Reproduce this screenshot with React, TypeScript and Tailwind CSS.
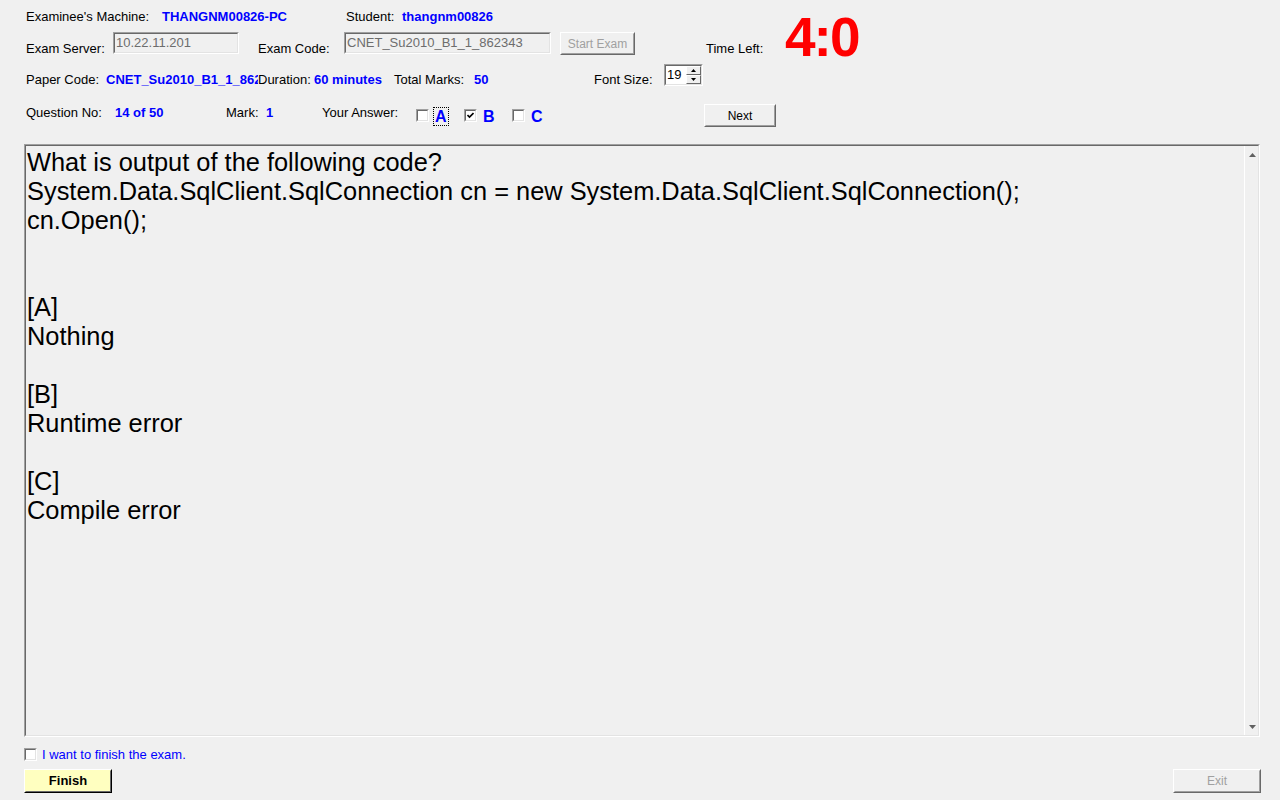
import React from 'react'

const Label = ({ children, className = '' }: { children: React.ReactNode; className?: string }) => (
  <span className={`text-[13px] leading-[15px] text-black whitespace-nowrap ${className}`}>{children}</span>
)

const Value = ({ children, className = '' }: { children: React.ReactNode; className?: string }) => (
  <span className={`text-[13px] leading-[15px] font-bold text-[#0000ff] whitespace-nowrap ${className}`}>{children}</span>
)

function Field({ value, width }: { value: string; width: string }) {
  return (
    <div className={`${width} h-[22px] border border-t-[#a0a0a0] border-l-[#a0a0a0] border-b-white border-r-white bg-[#f0f0f0]`}>
      <div className="h-full border border-t-[#696969] border-l-[#696969] border-b-[#e3e3e3] border-r-[#e3e3e3] pl-[1px] text-[13px] leading-[18px] text-[#6d6d6d] whitespace-nowrap overflow-hidden">
        {value}
      </div>
    </div>
  )
}

function WinButton({ label, width, disabled }: { label: string; width: string; disabled?: boolean }) {
  return (
    <div className={`${width} h-[23px] border border-t-white border-l-white border-b-[#696969] border-r-[#696969] bg-[#f0f0f0]`}>
      <div
        className={`h-full flex items-center justify-center border border-t-[#f0f0f0] border-l-[#f0f0f0] border-b-[#a0a0a0] border-r-[#a0a0a0] text-[12px] ${
          disabled ? 'text-[#a0a0a0]' : 'text-black'
        }`}
      >
        {label}
      </div>
    </div>
  )
}

function CheckBox({ checked }: { checked?: boolean }) {
  return (
    <div className="w-[13px] h-[13px] border border-t-[#a0a0a0] border-l-[#a0a0a0] border-b-white border-r-white">
      <div className="w-full h-full border border-t-[#696969] border-l-[#696969] border-b-[#e3e3e3] border-r-[#e3e3e3] bg-white flex items-center justify-center">
        {checked && (
          <svg width="7" height="7" viewBox="0 0 7 7">
            <path d="M0.5 3 L2.5 5 L6.5 1" stroke="black" strokeWidth="1.6" fill="none" />
          </svg>
        )}
      </div>
    </div>
  )
}

function Arrow({ down }: { down?: boolean }) {
  return (
    <svg width="7" height="4" viewBox="0 0 7 4">
      <path d={down ? 'M0 0 H7 L3.5 4 Z' : 'M0 4 H7 L3.5 0 Z'} fill="#606060" />
    </svg>
  )
}

const lines = [
  'What is output of the following code?',
  'System.Data.SqlClient.SqlConnection cn = new System.Data.SqlClient.SqlConnection();',
  'cn.Open();',
  '',
  '',
  '[A]',
  'Nothing',
  '',
  '[B]',
  'Runtime error',
  '',
  '[C]',
  'Compile error',
]

export default function App() {
  return (
    <div className="w-[1280px] h-[800px] bg-[#f0f0f0] font-['Liberation_Sans',Arial,sans-serif] overflow-hidden">
      {/* row 1 */}
      <div className="flex items-center h-[22px] mt-[5px] pl-[26px]">
        <Label className="w-[136px]">Examinee's Machine:</Label>
        <Value className="w-[184px]">THANGNM00826-PC</Value>
        <Label className="w-[56px]">Student:</Label>
        <Value>thangnm00826</Value>
      </div>

      {/* row 2 */}
      <div className="flex items-start h-[22px] mt-[5px] pl-[26px]">
        <Label className="w-[87px] mt-[9px]">Exam Server:</Label>
        <Field value="10.22.11.201" width="w-[126px]" />
        <Label className="w-[86px] ml-[19px] mt-[9px]">Exam Code:</Label>
        <Field value="CNET_Su2010_B1_1_862343" width="w-[207px]" />
        <div className="ml-[9px]">
          <WinButton label="Start Exam" width="w-[75px]" disabled />
        </div>
        <Label className="w-[79px] ml-[71px] mt-[9px]">Time Left:</Label>
        <span className="-mt-[22px] text-[55px] leading-none font-bold tracking-[-2px] text-[#ff0000]">4:0</span>
      </div>

      {/* row 3 */}
      <div className="flex items-start h-[22px] mt-[10px] pl-[26px]">
        <Label className="w-[80px] mt-[8px]">Paper Code:</Label>
        <div className="w-[152px] overflow-hidden mt-[8px] flex text-[13px] leading-[15px]">
          <Value>CNET_Su2010_B1_1_862343</Value>
        </div>
        <Label className="w-[56px] mt-[8px]">Duration:</Label>
        <Value className="w-[80px] mt-[8px]">60 minutes</Value>
        <Label className="w-[80px] mt-[8px]">Total Marks:</Label>
        <Value className="w-[120px] mt-[8px]">50</Value>
        <Label className="w-[70px] mt-[8px]">Font Size:</Label>
        <div className="w-[39px] h-[22px] border border-t-[#a0a0a0] border-l-[#a0a0a0] border-b-white border-r-white">
          <div className="h-full flex border border-t-[#696969] border-l-[#696969] border-b-[#e3e3e3] border-r-[#e3e3e3] bg-white">
            <span className="flex-1 pl-[1px] text-[13px] leading-[18px] text-black">19</span>
            <div className="w-[15px] flex flex-col">
              <div className="flex-1 flex items-center justify-center border border-t-white border-l-white border-b-[#696969] border-r-[#696969] bg-[#f0f0f0]">
                <svg width="5" height="3" viewBox="0 0 5 3"><path d="M0 3 H5 L2.5 0 Z" fill="black" /></svg>
              </div>
              <div className="flex-1 flex items-center justify-center border border-t-white border-l-white border-b-[#696969] border-r-[#696969] bg-[#f0f0f0]">
                <svg width="5" height="3" viewBox="0 0 5 3"><path d="M0 0 H5 L2.5 3 Z" fill="black" /></svg>
              </div>
            </div>
          </div>
        </div>
      </div>

      {/* row 4 */}
      <div className="flex items-start h-[23px] mt-[18px] pl-[26px]">
        <Label className="w-[89px] mt-[1px]">Question No:</Label>
        <Value className="w-[111px] mt-[1px]">14 of 50</Value>
        <Label className="w-[40px] mt-[1px]">Mark:</Label>
        <Value className="w-[56px] mt-[1px]">1</Value>
        <Label className="w-[94px] mt-[1px]">Your Answer:</Label>
        <div className="w-[48px] flex items-start">
          <div className="mt-[5px]"><CheckBox /></div>
          <span className="ml-[4px] mt-[3px] px-[1px] h-[19px] border border-dotted border-black text-[16px] leading-[18px] font-bold text-[#0000ff]">A</span>
        </div>
        <div className="w-[48px] flex items-start">
          <div className="mt-[5px]"><CheckBox checked /></div>
          <span className="ml-[6px] mt-[4px] text-[16px] leading-[18px] font-bold text-[#0000ff]">B</span>
        </div>
        <div className="w-[192px] flex items-start">
          <div className="mt-[5px]"><CheckBox /></div>
          <span className="ml-[6px] mt-[4px] text-[16px] leading-[18px] font-bold text-[#0000ff]">C</span>
        </div>
        <WinButton label="Next" width="w-[72px]" />
      </div>

      {/* question box */}
      <div className="ml-[24px] mt-[17px] w-[1236px] h-[593px] flex border border-t-[#a0a0a0] border-l-[#a0a0a0] border-b-white border-r-white">
        <div className="flex-1 flex border border-t-[#696969] border-l-[#696969] border-b-[#e3e3e3] border-r-[#e3e3e3]">
          <div className="flex-1 pl-[1px] pt-[2px] text-[25.4px] leading-[29px] text-black">
            {lines.map((l, i) => (
              <div key={i} className="h-[29px] whitespace-pre">{l}</div>
            ))}
          </div>
          <div className="w-[14px] flex flex-col justify-between border-l border-l-white bg-[#f0f0f0]">
            <div className="h-[17px] flex items-center justify-center pl-[2px]"><Arrow /></div>
            <div className="h-[17px] flex items-center justify-center pl-[2px]"><Arrow down /></div>
          </div>
        </div>
      </div>

      {/* finish row */}
      <div className="flex items-center h-[13px] mt-[11px] pl-[24px]">
        <CheckBox />
        <span className="ml-[5px] text-[13px] leading-[15px] text-[#0000ff]">I want to finish the exam.</span>
      </div>

      <div className="flex justify-between mt-[8px] pl-[24px] pr-[19px]">
        <div className="w-[88px] h-[24px] border border-t-white border-l-white border-b-black border-r-black bg-[#ffffc0]">
          <div className="h-full flex items-center justify-center border border-t-[#ffffc0] border-l-[#ffffc0] border-b-[#696969] border-r-[#696969] text-[13px] font-bold text-black">
            Finish
          </div>
        </div>
        <div className="w-[88px] h-[24px] border border-t-white border-l-white border-b-[#696969] border-r-[#696969] bg-[#f0f0f0]">
          <div className="h-full flex items-center justify-center border border-t-[#f0f0f0] border-l-[#f0f0f0] border-b-[#a0a0a0] border-r-[#a0a0a0] text-[12px] text-[#a0a0a0]">
            Exit
          </div>
        </div>
      </div>
    </div>
  )
}
